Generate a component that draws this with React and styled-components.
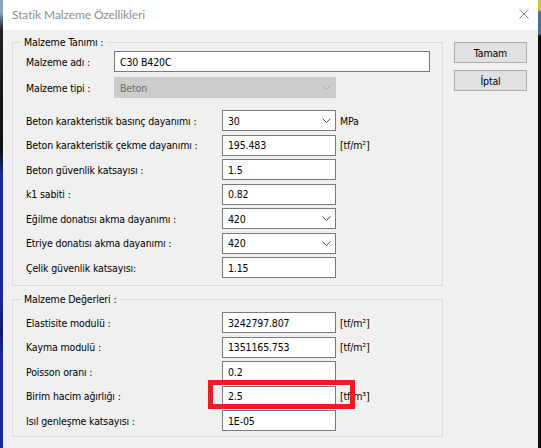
import React from "react";
import styled, { createGlobalStyle } from "styled-components";

const Global = createGlobalStyle`
  html, body { margin: 0; padding: 0; background: #000; overflow: hidden; }
  * { box-sizing: border-box; }
`;

const Screen = styled.div`
  display: flex;
  width: 541px;
  height: 448px;
  overflow: hidden;
  font-family: "DejaVu Sans Condensed", "DejaVu Sans", sans-serif;
  font-stretch: condensed;
  font-size: 10.5px;
  letter-spacing: -0.15px;
  color: #000;
`;

const EdgeStrip = styled.div`
  flex: 0 0 3px;
  height: 100%;
  background: ${(p) =>
    p.$side === "left"
      ? "linear-gradient(to bottom, #8aa4c4 0, #8aa4c4 12px, #202020 30px, #101010 150px, #1a2c9c 175px, #1a2c9c 300px, #0f1a60 330px, #1a2c9c 360px, #1a2c9c 100%)"
      : "linear-gradient(to bottom, #d8c62a 0, #d8c62a 10px, #4a6aa8 12px, #4a6aa8 34px, #0b0b0b 36px, #0b0b0b 100%)"};
`;

const Window = styled.div`
  flex: 1 1 auto;
  display: flex;
  flex-direction: column;
  background: #f0f0f0;
  min-width: 0;
`;

const TitleBar = styled.div`
  height: 30px;
  flex: 0 0 30px;
  background: #fff;
  display: flex;
  align-items: center;
  justify-content: space-between;
  padding: 0 9px 0 9px;
`;

const Title = styled.span`
  font-family: Lato, "Noto Sans", sans-serif;
  font-stretch: normal;
  font-size: 12px;
  letter-spacing: -0.1px;
  color: #8f8f8f;
  margin-top: -1px;
`;

const CloseIcon = styled.svg`
  width: 10px;
  height: 10px;
  margin-top: -2px;
`;

const Body = styled.div`
  display: flex;
  align-items: flex-start;
  padding: 12px 0 0 9px;
`;

const Groups = styled.div`
  display: flex;
  flex-direction: column;
  width: 431px;
`;

const Group = styled.div`
  border: 1px solid #dcdcdc;
  padding: 0 0 ${(p) => p.$pb}px 13px;
  margin-top: ${(p) => p.$mt || 0}px;
  display: flex;
  flex-direction: column;
`;

const Legend = styled.div`
  width: fit-content;
  margin: -8px 0 0 -5px;
  padding: 0 3px;
  height: 14px;
  line-height: 14px;
  background: #f0f0f0;
`;

const RowList = styled.div`
  display: flex;
  flex-direction: column;
  gap: 3.5px;
  margin-top: ${(p) => p.$mt || 0}px;
`;

const Row = styled.div`
  display: flex;
  align-items: center;
  height: 21px;
  margin-top: ${(p) => p.$mt || 0}px;
`;

const Label = styled.span`
  flex: 0 0 ${(p) => p.$w}px;
  white-space: nowrap;
`;

const FieldWrap = styled.div`
  position: relative;
  display: flex;
  align-items: center;
  height: 21px;
`;

const Field = styled.div`
  width: ${(p) => p.$w}px;
  height: 21px;
  display: flex;
  align-items: center;
  justify-content: space-between;
  padding: 0 4px 0 5px;
  border: 1px solid ${(p) => (p.$disabled ? "#cccccc" : "#7a7a7a")};
  background: ${(p) => (p.$disabled ? "#cccccc" : "#ffffff")};
  color: ${(p) => (p.$disabled ? "#6d6d6d" : "#000")};
  white-space: nowrap;
`;

const Chevron = styled.svg`
  width: 9px;
  height: 5px;
  flex: 0 0 9px;
`;

const Unit = styled.span`
  margin-left: 4px;
  white-space: nowrap;
`;

const Highlight = styled.div`
  position: absolute;
  left: -14px;
  top: -6px;
  width: 147px;
  height: 29px;
  border: 5px solid #ed1c24;
  pointer-events: none;
`;

const Buttons = styled.div`
  display: flex;
  flex-direction: column;
  gap: 7px;
  margin-left: 11px;
`;

const Button = styled.div`
  width: 73px;
  height: 21px;
  display: flex;
  align-items: center;
  justify-content: center;
  background: #e1e1e1;
  border: 1px solid #adadad;
`;

function Select({ value, w, disabled }) {
  return (
    <Field $w={w} $disabled={disabled}>
      <span>{value}</span>
      <Chevron viewBox="0 0 9 5">
        <path
          d="M0.5 0.5 L4.5 4.5 L8.5 0.5"
          fill="none"
          stroke={disabled ? "#a8a8a8" : "#5a5a5a"}
          strokeWidth="1"
        />
      </Chevron>
    </Field>
  );
}

const material = [
  { label: "Beton karakteristik basınç dayanımı :", value: "30", select: true, unit: "MPa" },
  { label: "Beton karakteristik çekme dayanımı :", value: "195.483", unit: "[tf/m²]" },
  { label: "Beton güvenlik katsayısı :", value: "1.5" },
  { label: "k1 sabiti :", value: "0.82" },
  { label: "Eğilme donatısı akma dayanımı :", value: "420", select: true },
  { label: "Etriye donatısı akma dayanımı :", value: "420", select: true },
  { label: "Çelik güvenlik katsayısı:", value: "1.15" },
];

const values = [
  { label: "Elastisite modulü :", value: "3242797.807", unit: "[tf/m²]" },
  { label: "Kayma modulü :", value: "1351165.753", unit: "[tf/m²]" },
  { label: "Poisson oranı :", value: "0.2" },
  { label: "Birim hacim ağırlığı :", value: "2.5", unit: "[tf/m³]", highlight: true },
  { label: "Isıl genleşme katsayısı :", value: "1E-05" },
];

function DataRow({ item }) {
  return (
    <Row>
      <Label $w={196}>{item.label}</Label>
      {item.select ? (
        <Select value={item.value} w={114} />
      ) : (
        <Field $w={114}>{item.value}</Field>
      )}
      {item.unit && <Unit>{item.unit}</Unit>}
    </Row>
  );
}

function HighlightRow({ item }) {
  return (
    <Row>
      <Label $w={196}>{item.label}</Label>
      <FieldWrap>
        <Field $w={114}>{item.value}</Field>
        <Unit>{item.unit}</Unit>
        <Highlight />
      </FieldWrap>
    </Row>
  );
}

export default function App() {
  return (
    <>
      <Global />
      <Screen>
        <EdgeStrip $side="left" />
        <Window>
          <TitleBar>
            <Title>Statik Malzeme Özellikleri</Title>
            <CloseIcon viewBox="0 0 10 10">
              <path d="M0.5 0.5 L9.5 9.5 M9.5 0.5 L0.5 9.5" stroke="#8a8a8a" strokeWidth="1" fill="none" />
            </CloseIcon>
          </TitleBar>
          <Body>
            <Groups>
              <Group $pb={7}>
                <Legend>Malzeme Tanımı :</Legend>
                <Row $mt={2}>
                  <Label $w={88}>Malzeme adı :</Label>
                  <Field $w={316}>C30 B420C</Field>
                </Row>
                <Row $mt={5}>
                  <Label $w={88}>Malzeme tipi :</Label>
                  <Select value="Beton" w={222} disabled />
                </Row>
                <RowList $mt={12}>
                  {material.map((m) => (
                    <DataRow key={m.label} item={m} />
                  ))}
                </RowList>
              </Group>
              <Group $pb={5} $mt={13}>
                <Legend>Malzeme Değerleri :</Legend>
                <RowList $mt={6}>
                  {values.map((v) =>
                    v.highlight ? (
                      <HighlightRow key={v.label} item={v} />
                    ) : (
                      <DataRow key={v.label} item={v} />
                    )
                  )}
                </RowList>
              </Group>
            </Groups>
            <Buttons>
              <Button>Tamam</Button>
              <Button>İptal</Button>
            </Buttons>
          </Body>
        </Window>
        <EdgeStrip $side="right" />
      </Screen>
    </>
  );
}
